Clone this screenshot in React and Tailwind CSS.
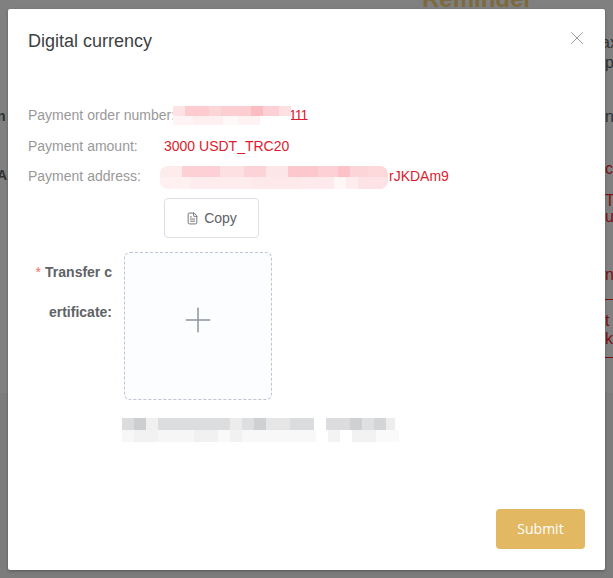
import React from 'react'
import { X, Plus, FileText } from 'lucide-react'

// pixelated smudge that hides private values
const pinkTop = [
  ['w-[12px]', 'bg-[#fde3e5]'], ['w-[24px]', 'bg-[#fcccd0]'], ['w-[12px]', 'bg-[#fcd5d8]'], ['w-[30px]', 'bg-[#fccdd1]'],
  ['w-[12px]', 'bg-[#fbbcc2]'], ['w-[16px]', 'bg-[#fcd0d4]'], ['w-[12px]', 'bg-[#fde0e2]'],
]
const pinkBottom = [
  ['w-[20px]', 'bg-[#fff4f5]'], ['w-[30px]', 'bg-[#fef0f1]'], ['w-[15px]', 'bg-[#fff8f8]'], ['w-[22px]', 'bg-[#fef2f3]'], ['w-[31px]', 'bg-white'],
]
const addrTop = [
  ['w-[22px]', 'bg-[#feeced]'], ['w-[38px]', 'bg-[#fcd0d4]'], ['w-[24px]', 'bg-[#fde0e2]'], ['w-[22px]', 'bg-[#fcd3d7]'], ['w-[22px]', 'bg-[#fde6e8]'],
  ['w-[30px]', 'bg-[#fcc8cd]'], ['w-[20px]', 'bg-[#fcd0d4]'], ['w-[12px]', 'bg-[#fbc2c8]'], ['w-[18px]', 'bg-[#fcd5d8]'], ['w-[20px]', 'bg-[#fdd9dc]'],
]
const addrBottom = [
  ['w-[30px]', 'bg-[#fff0f1]'], ['w-[62px]', 'bg-[#feecee]'], ['w-[48px]', 'bg-[#fde8ea]'], ['w-[34px]', 'bg-[#feeaec]'], ['w-[12px]', 'bg-[#fff6f6]'],
  ['w-[12px]', 'bg-[#feecee]'], ['w-[30px]', 'bg-[#fde3e5]'],
]
const greyTop = [
  ['w-[12px]', 'bg-[#dcdcde]'], ['w-[12px]', 'bg-[#cdced0]'], ['w-[12px]', 'bg-[#f0f0f1]'], ['w-[72px]', 'bg-[#dcdddf]'], ['w-[12px]', 'bg-[#ececed]'],
  ['w-[12px]', 'bg-[#dedfe0]'], ['w-[12px]', 'bg-[#cfd0d2]'], ['w-[24px]', 'bg-[#e6e6e7]'], ['w-[24px]', 'bg-[#dbdcdd]'], ['w-[12px]', 'bg-white'],
  ['w-[24px]', 'bg-[#dcdcde]'], ['w-[12px]', 'bg-[#cfd0d2]'], ['w-[12px]', 'bg-[#e0e0e2]'], ['w-[12px]', 'bg-[#d4d5d7]'], ['w-[9px]', 'bg-[#ededee]'],
]
const greyBottom = [
  ['w-[12px]', 'bg-[#f7f7f8]'], ['w-[24px]', 'bg-[#f2f2f3]'], ['w-[36px]', 'bg-[#f6f6f7]'], ['w-[24px]', 'bg-[#f1f1f2]'], ['w-[12px]', 'bg-[#f9f9f9]'],
  ['w-[12px]', 'bg-[#f1f1f2]'], ['w-[74px]', 'bg-[#f8f8f8]'], ['w-[12px]', 'bg-white'], ['w-[12px]', 'bg-[#f3f3f4]'], ['w-[12px]', 'bg-white'],
  ['w-[24px]', 'bg-[#f2f2f3]'], ['w-[23px]', 'bg-[#fafafa]'],
]

function Smudge({ top, bottom, className }) {
  return (
    <div className={`flex flex-col overflow-hidden ${className}`}>
      {[top, bottom].map((cells, i) => (
        <div key={i} className="flex flex-1">
          {cells.map(([w, bg], j) => (
            <div key={j} className={`${w} ${bg} shrink-0`} />
          ))}
        </div>
      ))}
    </div>
  )
}

function Row({ label, children }) {
  return (
    <div className="flex h-[30px] items-center text-[14px]">
      <span className="w-[136px] shrink-0 whitespace-nowrap text-[#999999]">{label}</span>
      {children}
    </div>
  )
}

export default function App() {
  return (
    <div className="relative h-[578px] w-[613px] overflow-hidden bg-[#808080] font-['Liberation_Sans',Arial,sans-serif]">
      {/* page behind the dialog, only the edges show */}
      <div className="absolute -top-[15px] left-[422px] text-[24px] font-bold leading-[28px] text-[#7d6a3c]">Reminder</div>
      <div className="absolute left-[-3px] top-[106px] text-[14px] font-bold text-[#303030]">n</div>
      <div className="absolute left-[-3px] top-[165px] text-[14px] font-bold text-[#303030]">A</div>
      <div className="absolute left-[601px] top-[33px] text-[16px] leading-[20px] text-[#303030]">ax</div>
      <div className="absolute left-[605px] top-[53px] text-[16px] leading-[20px] text-[#303030]">p</div>
      <div className="absolute left-[605px] top-[105px] text-[16px] text-[#303030]">n</div>
      <div className="absolute left-[605px] top-[157px] text-[16px] text-[#7c0f0f]">c</div>
      <div className="absolute left-[605px] top-[193px] text-[16px] leading-[16px] text-[#7c0f0f]">T<br />u</div>
      <div className="absolute left-[605px] top-[263px] text-[16px] text-[#7c0f0f]">n</div>
      <div className="absolute left-[605px] top-[299px] h-px w-[8px] bg-[#7c0f0f]" />
      <div className="absolute left-[605px] top-[309px] text-[16px] text-[#7c0f0f]">t</div>
      <div className="absolute left-[605px] top-[327px] text-[16px] text-[#7c0f0f]">k</div>
      <div className="absolute left-[605px] top-[357px] h-px w-[8px] bg-[#7c0f0f]" />
      <div className="absolute bottom-0 left-0 top-[393px] w-full bg-[#7c7c7c]" />

      {/* dialog */}
      <div className="absolute left-[8px] top-[9px] flex h-[561px] w-[597px] flex-col rounded-[2px] bg-white shadow-[0_1px_3px_rgba(0,0,0,0.3)]">
        <div className="flex items-start justify-between pl-[20px] pr-[17px] pt-[20px]">
          <h2 className="text-[18px] leading-[24px] text-[#3d3f43]">Digital currency</h2>
          <X className="mt-[-2px] h-[22px] w-[22px] text-[#909399]" strokeWidth={1} />
        </div>

        <div className="flex flex-col pl-[20px] pt-[47px]">
          <div className="flex h-[31px] items-center text-[14px]">
            <span className="whitespace-nowrap text-[#999999]">Payment order number:</span>
            <span className="relative ml-[-2px] whitespace-nowrap pl-[116px] tracking-[-1px] text-[#dc1c2e]">
              <Smudge top={pinkTop} bottom={pinkBottom} className="absolute left-0 top-[1px] h-[19px] w-[118px]" />
              111
            </span>
          </div>
          <Row label="Payment amount:">
            <span className="text-[#dc1c2e]">3000 USDT_TRC20</span>
          </Row>
          <Row label="Payment address:">
            <span className="relative whitespace-nowrap pl-[225px] text-[#dc1c2e]">
              <Smudge top={addrTop} bottom={addrBottom} className="absolute left-[-4px] top-0 h-[23px] w-[228px] rounded-[8px]" />
              rJKDAm9
            </span>
          </Row>
          <button className="ml-[136px] mt-[7px] flex h-[40px] w-[95px] items-center justify-center gap-[5px] rounded-[4px] border border-[#dcdfe6] bg-white text-[14px] text-[#606266]">
            <FileText className="h-[13px] w-[13px]" strokeWidth={1.6} />
            Copy
          </button>

          <div className="ml-[-4px] mt-[14px] flex items-start">
            <div className="w-[88px] shrink-0 whitespace-nowrap text-right text-[14px] font-bold leading-[40px] text-[#606266]">
              <span className="mr-[4px] font-normal text-[#f56c6c]">*</span>
              Transfer c
              <br />
              ertificate:
            </div>
            <div className="ml-[12px] flex h-[148px] w-[148px] items-center justify-center rounded-[6px] border border-dashed border-[#bfc5d2] bg-[#fbfdff]">
              <Plus className="mb-[12px] h-[40px] w-[40px] text-[#8c939d]" strokeWidth={0.9} />
            </div>
          </div>

          <Smudge top={greyTop} bottom={greyBottom} className="ml-[94px] mt-[18px] h-[24px] w-[277px]" />
        </div>

        <div className="mt-auto flex justify-end pb-[21px] pr-[20px]">
          <button className="h-[40px] w-[89px] rounded-[4px] bg-[#e2b862] pb-[2px] font-['Open_Sans',sans-serif] text-[14px] font-medium text-white">
            Submit
          </button>
        </div>
      </div>
    </div>
  )
}
